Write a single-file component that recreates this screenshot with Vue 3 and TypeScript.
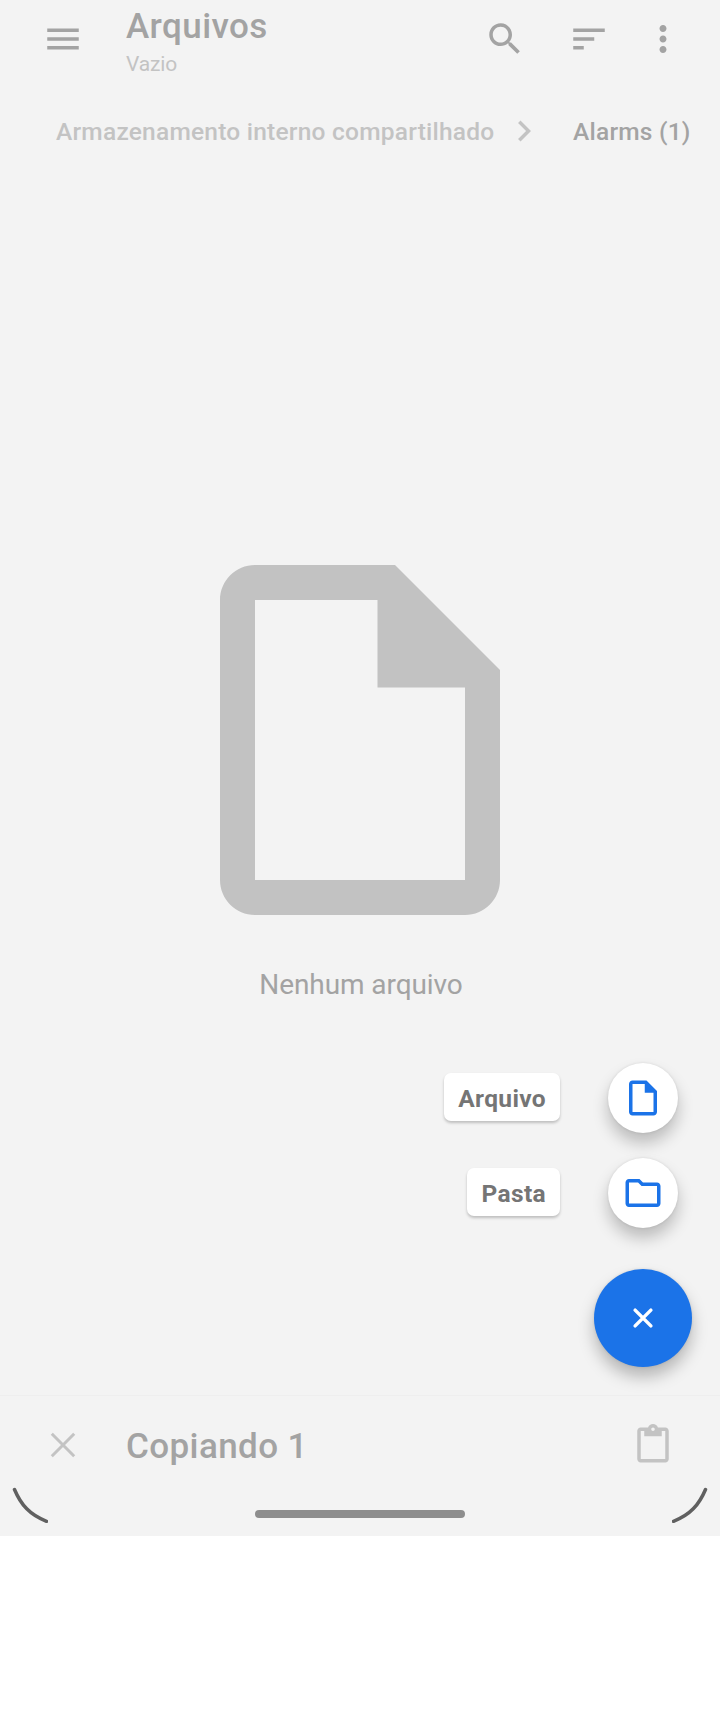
<script setup lang="ts">
interface Action {
  label: string
  path: string
}

const paths = {
  menu: 'M3 18h18v-2H3v2zm0-5h18v-2H3v2zm0-7v2h18V6H3z',
  search:
    'M15.5 14h-.79l-.28-.27C15.41 12.59 16 11.11 16 9.5 16 5.91 13.09 3 9.5 3S3 5.91 3 9.5 5.91 16 9.5 16c1.61 0 3.09-.59 4.23-1.57l.27.28v.79l5 4.99L20.49 19l-4.99-5zm-6 0C7.01 14 5 11.99 5 9.5S7.01 5 9.5 5 14 7.01 14 9.5 11.99 14 9.5 14z',
  sort: 'M3 18h6v-2H3v2zM3 6v2h18V6H3zm0 7h12v-2H3v2z',
  more: 'M12 8c1.1 0 2-.9 2-2s-.9-2-2-2-2 .9-2 2 .9 2 2 2zm0 2c-1.1 0-2 .9-2 2s.9 2 2 2 2-.9 2-2-.9-2-2-2zm0 6c-1.1 0-2 .9-2 2s.9 2 2 2 2-.9 2-2-.9-2-2-2z',
  chevron: 'M10 6L8.59 7.41 13.17 12l-4.58 4.59L10 18l6-6z',
  file: 'M6 2c-1.1 0-2 .9-2 2v16c0 1.1.9 2 2 2h12c1.1 0 2-.9 2-2V8l-6-6H6zm0 2h7v5h5v11H6V4z',
  folder:
    'M9.17 6l2 2H20v10H4V6h5.17M10 4H4c-1.1 0-1.99.9-1.99 2L2 18c0 1.1.9 2 2 2h16c1.1 0 2-.9 2-2V8c0-1.1-.9-2-2-2h-8l-2-2z',
  paste:
    'M19 2h-4.18C14.4.84 13.3 0 12 0S9.6.84 9.18 2H5c-1.1 0-2 .9-2 2v16c0 1.1.9 2 2 2h14c1.1 0 2-.9 2-2V4c0-1.1-.9-2-2-2zm-7 0c.55 0 1 .45 1 1s-.45 1-1 1-1-.45-1-1 .45-1 1-1zm7 18H5V4h2v3h10V4h2v16z',
}

const actions: Action[] = [
  { label: 'Arquivo', path: paths.file },
  { label: 'Pasta', path: paths.folder },
]
</script>

<template>
  <div class="screen">
    <header class="toolbar">
      <svg class="icon" viewBox="0 0 24 24"><path :d="paths.menu" /></svg>
      <div class="titles">
        <div class="title">Arquivos</div>
        <div class="subtitle">Vazio</div>
      </div>
      <svg class="icon" viewBox="0 0 24 24"><path :d="paths.search" /></svg>
      <svg class="icon sort" viewBox="0 0 24 24"><path :d="paths.sort" /></svg>
      <svg class="icon more" viewBox="0 0 24 24"><path :d="paths.more" /></svg>
    </header>

    <nav class="crumbs">
      <span class="crumb parent">Armazenamento interno compartilhado</span>
      <svg class="icon chevron" viewBox="0 0 24 24"><path :d="paths.chevron" /></svg>
      <span class="crumb">Alarms (1)</span>
    </nav>

    <main class="content">
      <svg class="empty-icon" viewBox="0 0 24 24"><path :d="paths.file" /></svg>
      <p class="empty-text">Nenhum arquivo</p>
    </main>

    <footer class="paste-bar">
      <svg class="icon close" viewBox="0 0 24 24">
        <path d="M5.6 5.6l12.8 12.8M18.4 5.6L5.6 18.4" />
      </svg>
      <div class="paste-title">Copiando 1</div>
      <svg class="icon paste" viewBox="0 0 24 24"><path :d="paths.paste" /></svg>
    </footer>

    <div class="gesture">
      <svg class="corner" viewBox="0 0 36 36"><path d="M2.5 2.5C9 18 18 28 34.5 34.3" /></svg>
      <div class="handle"></div>
      <svg class="corner" viewBox="0 0 36 36"><path d="M33.5 2.5C27 18 18 28 1.5 34.3" /></svg>
    </div>

    <div class="speed-dial">
      <div v-for="action in actions" :key="action.label" class="action">
        <span class="action-label">{{ action.label }}</span>
        <span class="mini-fab">
          <svg class="icon" viewBox="0 0 24 24"><path :d="action.path" /></svg>
        </span>
      </div>
      <div class="fab">
        <svg class="icon" viewBox="0 0 24 24"><path d="M7.5 7.5l9 9M16.5 7.5l-9 9" /></svg>
      </div>
    </div>
  </div>
</template>

<style>
body {
  background: #fff;
}
</style>

<style scoped>
.screen {
  position: relative;
  box-sizing: border-box;
  width: 720px;
  height: 1536px;
  overflow: hidden;
  display: flex;
  flex-direction: column;
  background: #f3f3f3;
  color: #a3a3a3;
  font-family: Roboto, sans-serif;
}
.icon {
  display: block;
  flex: none;
  width: 42px;
  height: 42px;
  fill: #a3a3a3;
}
.toolbar {
  display: flex;
  align-items: center;
  height: 78px;
  flex: none;
  padding: 0 36px 0 42px;
}
.titles {
  flex: 1;
  margin-left: 42px;
  padding-top: 5px;
}
.title,
.paste-title {
  font-size: 35px;
  font-weight: 500;
  line-height: 42px;
  letter-spacing: 0.4px;
}
.subtitle {
  font-size: 21px;
  line-height: 26px;
  margin-top: 3px;
  letter-spacing: -0.15px;
  color: #c3c3c3;
}
.sort {
  margin-left: 42px;
}
.more {
  margin-left: 32px;
}
.crumbs {
  display: flex;
  align-items: center;
  height: 106px;
  flex: none;
  padding-left: 56px;
  font-size: 24.5px;
  font-weight: 500;
  line-height: 30px;
  letter-spacing: 0.23px;
  white-space: nowrap;
}
.crumb {
  padding-top: 2px;
}
.parent {
  width: 447px;
  color: #c3c3c3;
}
.chevron {
  margin: 0 28px 0 0;
  fill: #c3c3c3;
}
.content {
  flex: 1;
  display: flex;
  flex-direction: column;
  align-items: center;
  padding-top: 346px;
}
.empty-icon {
  width: 420px;
  height: 420px;
  fill: #c2c2c2;
}
.empty-text {
  margin: 18px 0 0 2px;
  font-size: 28px;
  line-height: 34px;
  letter-spacing: -0.08px;
}
.paste-bar {
  box-sizing: border-box;
  display: flex;
  align-items: center;
  flex: none;
  height: 98px;
  padding: 0 46px 0 42px;
  border-top: 1px solid #eee;
}
.paste-title {
  flex: 1;
  margin-left: 42px;
  padding-top: 4px;
}
.close {
  fill: none;
  stroke: #c3c3c3;
  stroke-width: 1.7;
}
.paste {
  fill: #c3c3c3;
}
.gesture {
  box-sizing: border-box;
  flex: none;
  display: flex;
  align-items: center;
  justify-content: space-between;
  height: 43px;
  padding: 0 12px 1px;
}
.corner {
  width: 36px;
  height: 36px;
  margin-bottom: 18px;
  fill: none;
  stroke: #606060;
  stroke-width: 3.5;
  stroke-linecap: round;
}
.handle {
  width: 210px;
  height: 8px;
  border-radius: 4px;
  background: #8d8d8d;
}
.speed-dial {
  position: absolute;
  right: 28px;
  top: 1063px;
  display: flex;
  flex-direction: column;
  align-items: flex-end;
}
.action {
  display: flex;
  align-items: center;
  gap: 48px;
  margin: 0 14px 25px 0;
}
.action-label {
  box-sizing: border-box;
  height: 48px;
  margin-bottom: 2px;
  padding: 2px 14px 0;
  border-radius: 7px;
  background: #fff;
  color: #757575;
  font-size: 24.5px;
  font-weight: 700;
  line-height: 48px;
  letter-spacing: 0.35px;
  box-shadow: 0 2px 3px rgba(0, 0, 0, 0.22);
}
.mini-fab,
.fab {
  display: flex;
  align-items: center;
  justify-content: center;
  border-radius: 50%;
}
.mini-fab {
  width: 70px;
  height: 70px;
  background: #fff;
  box-shadow: 0 10px 16px rgba(0, 0, 0, 0.23), 0 0 3px rgba(0, 0, 0, 0.1);
}
.mini-fab .icon {
  fill: #1b73e8;
}
.fab {
  width: 98px;
  height: 98px;
  margin-top: 16px;
  background: #1b73e8;
  box-shadow: 0 10px 16px rgba(0, 0, 0, 0.25), 0 0 3px rgba(0, 0, 0, 0.1);
}
.fab .icon {
  fill: none;
  stroke: #fff;
  stroke-width: 2;
  stroke-linecap: round;
}
</style>
